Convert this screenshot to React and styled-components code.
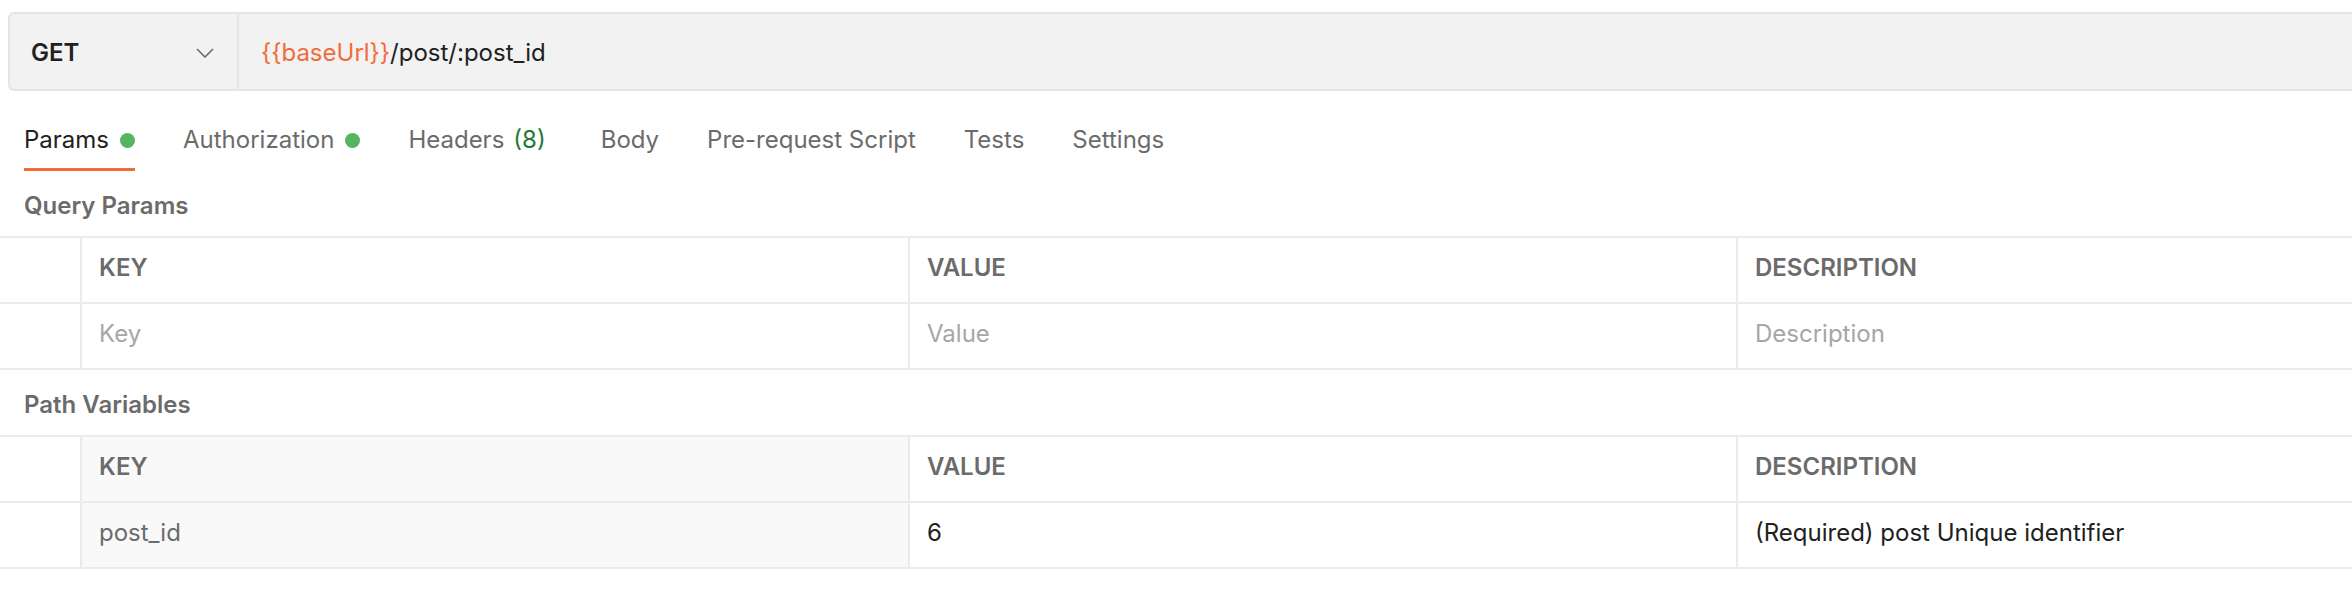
import React from 'react';
import styled, { createGlobalStyle } from 'styled-components';

const GlobalStyle = createGlobalStyle`
    body {
        margin: 0;
        background: #ffffff;
        font-family: Inter, 'Noto Sans', sans-serif;
        color: #212121;
    }
`;

const Root = styled.div`
    padding-top: 12px;
    overflow: hidden;
`;

const UrlBar = styled.div`
    display: flex;
    height: 79px;
    margin-left: 8px;
    box-sizing: border-box;
    border: 2px solid #e5e5e5;
    border-right: none;
    border-radius: 6px 0 0 6px;
    background: #f2f2f2;
    font-size: 24px;
`;

const Method = styled.div`
    display: flex;
    align-items: center;
    justify-content: space-between;
    width: 229px;
    padding: 2px 23px 0 21px;
    box-sizing: border-box;
    border-right: 2px solid #e5e5e5;
    font-weight: 600;
    color: #212121;
`;

const UrlText = styled.div`
    display: flex;
    align-items: center;
    padding: 2px 0 0 22px;
    color: #212121;
`;

const Variable = styled.span`
    color: #f26b3a;
`;

const Tabs = styled.div`
    display: flex;
    gap: 48px;
    margin-top: 37px;
    padding: 0 24px;
`;

const Tab = styled.div`
    display: flex;
    align-items: center;
    line-height: 24px;
    font-size: 24px;
    padding-bottom: 16px;
    border-bottom: 3px solid ${p => (p.$active ? '#f26b3a' : 'transparent')};
    color: ${p => (p.$active ? '#212121' : '#6b6b6b')};
    margin-right: ${p => p.$extra || 0}px;
`;

const Dot = styled.span`
    width: 15px;
    height: 15px;
    margin-left: 11px;
    border-radius: 50%;
    background: #55b560;
`;

const Count = styled.span`
    margin-left: 9px;
    color: #1e7b34;
`;

const SectionTitle = styled.div`
    padding: 23px 24px 18px;
    font-size: 24px;
    line-height: 24px;
    font-weight: 600;
    color: #6b6b6b;
`;

const Table = styled.div`
    display: grid;
    grid-template-columns: 80px 828px 828px 1fr;
    border-top: 2px solid #ebebeb;
`;

const Cell = styled.div`
    display: flex;
    align-items: center;
    height: 66px;
    padding: 0 17px 4px;
    box-sizing: border-box;
    border-bottom: 2px solid #ebebeb;
    border-left: ${p => (p.$first ? 'none' : '2px solid #ebebeb')};
    background: ${p => (p.$readonly ? '#f9f9f9' : '#ffffff')};
    font-size: 24px;
    line-height: 24px;
    color: ${p => p.$color || '#212121'};
    font-weight: ${p => (p.$head ? 600 : 400)};
    white-space: nowrap;
`;

const Chevron = () => (
    <svg width="18" height="10" viewBox="0 0 18 10" fill="none">
        <polyline points="1,1 9,9 17,1" stroke="#6b6b6b" strokeWidth="1.6" />
    </svg>
);

const TABS = [
    { label: 'Params', dot: true, active: true },
    { label: 'Authorization', dot: true },
    { label: 'Headers', count: '(8)', extra: 7 },
    { label: 'Body' },
    { label: 'Pre-request Script' },
    { label: 'Tests' },
    { label: 'Settings' },
];

function ParamTable({ rows, readonlyKey }) {
    return (
        <Table>
            <Cell $first />
            <Cell $head $color="#6b6b6b" $readonly={readonlyKey}>KEY</Cell>
            <Cell $head $color="#6b6b6b">VALUE</Cell>
            <Cell $head $color="#6b6b6b">DESCRIPTION</Cell>
            {rows.map((row, i) => (
                <React.Fragment key={i}>
                    <Cell $first />
                    <Cell $color={row.keyColor} $readonly={readonlyKey}>{row.key}</Cell>
                    <Cell $color={row.valueColor}>{row.value}</Cell>
                    <Cell $color={row.descColor}>{row.desc}</Cell>
                </React.Fragment>
            ))}
        </Table>
    );
}

export default function App() {
    return (
        <Root>
            <GlobalStyle />
            <UrlBar>
                <Method>
                    GET
                    <Chevron />
                </Method>
                <UrlText>
                    <Variable>{'{{baseUrl}}'}</Variable>/post/:post_id
                </UrlText>
            </UrlBar>
            <Tabs>
                {TABS.map(tab => (
                    <Tab key={tab.label} $active={tab.active} $extra={tab.extra}>
                        {tab.label}
                        {tab.dot ? <Dot /> : null}
                        {tab.count ? <Count>{tab.count}</Count> : null}
                    </Tab>
                ))}
            </Tabs>
            <SectionTitle>Query Params</SectionTitle>
            <ParamTable
                rows={[
                    {
                        key: 'Key',
                        value: 'Value',
                        desc: 'Description',
                        keyColor: '#a6a6a6',
                        valueColor: '#a6a6a6',
                        descColor: '#a6a6a6',
                    },
                ]}
            />
            <SectionTitle>Path Variables</SectionTitle>
            <ParamTable
                readonlyKey
                rows={[
                    {
                        key: 'post_id',
                        value: '6',
                        desc: '(Required) post Unique identifier',
                        keyColor: '#6b6b6b',
                    },
                ]}
            />
        </Root>
    );
}
